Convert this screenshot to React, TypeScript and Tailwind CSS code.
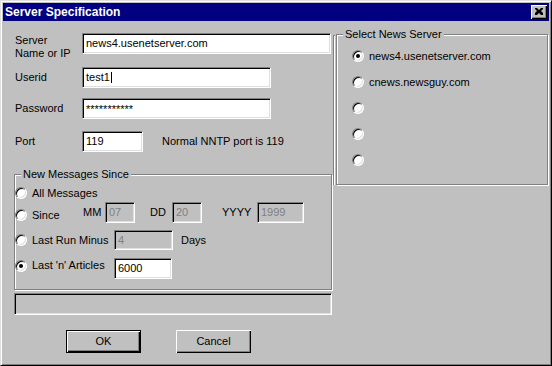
import type { ReactNode } from 'react';

const sunken =
  'border border-t-[#808080] border-l-[#808080] border-r-white border-b-white shadow-[inset_1px_1px_0_#000,inset_-1px_-1px_0_#dfdfdf]';
const etched = 'border border-[#808080] shadow-[1px_1px_0_#fff,inset_1px_1px_0_#fff]';

function Field({ className, value, disabled, children }: { className: string; value?: string; disabled?: boolean; children?: ReactNode }) {
  return (
    <div
      className={`${sunken} ${disabled ? 'bg-[#c0c0c0] text-[#808080]' : 'bg-white text-black'} ${className} flex items-center pl-[3px] shrink-0`}
    >
      {value}
      {children}
    </div>
  );
}

function Radio({ checked }: { checked?: boolean }) {
  return (
    <span className="w-[12px] h-[12px] rounded-full bg-white border border-t-[#808080] border-l-[#808080] border-r-white border-b-white shadow-[inset_1px_1px_0_#000,inset_-1px_-1px_0_#dfdfdf] flex items-center justify-center shrink-0">
      {checked && <span className="w-[4px] h-[4px] rounded-full bg-black" />}
    </span>
  );
}

function Group({ title, className, children }: { title: string; className: string; children: ReactNode }) {
  return (
    <div className={`relative ${etched} ${className} shrink-0`}>
      <span className="absolute -top-[7px] left-[6px] px-[2px] bg-[#c0c0c0] leading-[13px]">{title}</span>
      {children}
    </div>
  );
}

function Button({ label, isDefault }: { label: string; isDefault?: boolean }) {
  return (
    <div
      className={`w-[75px] h-[23px] flex items-center justify-center ${
        isDefault
          ? 'border border-black shadow-[inset_1px_1px_0_#fff,inset_-1px_-1px_0_#000,inset_-2px_-2px_0_#808080]'
          : 'shadow-[inset_1px_1px_0_#fff,inset_-1px_-1px_0_#000,inset_-2px_-2px_0_#808080]'
      }`}
    >
      {label}
    </div>
  );
}

export default function App() {
  const servers = ['news4.usenetserver.com', 'cnews.newsguy.com', '', '', ''];

  return (
    <div className="w-[552px] h-[366px] bg-[#c0c0c0] border border-t-[#dfdfdf] border-l-[#dfdfdf] border-r-black border-b-black shadow-[inset_1px_1px_0_#fff,inset_-1px_-1px_0_#808080] p-[2px] text-[11px] text-black font-['Liberation_Sans',Arial,sans-serif] flex flex-col overflow-hidden">
      {/* Title bar */}
      <div className="h-[18px] bg-[#000080] flex items-center justify-between pl-[2px] pr-[2px] shrink-0">
        <span className="text-white font-bold text-[12px]">Server Specification</span>
        <div className="w-[16px] h-[14px] bg-[#c0c0c0] shadow-[inset_1px_1px_0_#fff,inset_-1px_-1px_0_#000,inset_-2px_-2px_0_#808080] flex items-center justify-center">
          <svg width="8" height="7" viewBox="0 0 8 7" className="mb-[1px]">
            <path d="M0 0h2l2 2 2-2h2v1l-2 2 2 2v2H6L4 5 2 7H0V5l2-2-2-2z" fill="#000" />
          </svg>
        </div>
      </div>

      {/* Body */}
      <div className="flex pl-[11px]">
        {/* Left column */}
        <div className="w-[318px] flex flex-col shrink-0">
          <div className="flex items-start h-[21px] mt-[12px] pl-[1px]">
            <span className="w-[67px] leading-[13px] mt-[1px]">Server<br />Name or IP</span>
            <Field className="w-[249px] h-[21px]" value="news4.usenetserver.com" />
          </div>
          <div className="flex items-center mt-[13px] pl-[1px]">
            <span className="w-[67px]">Userid</span>
            <Field className="w-[189px] h-[21px]">
              test1<span className="w-[1px] h-[11px] bg-black ml-[1px]" />
            </Field>
          </div>
          <div className="flex items-center mt-[10px] pl-[1px]">
            <span className="w-[67px]">Password</span>
            <Field className="w-[189px] h-[21px] !items-start pt-[2px]" value="***********" />
          </div>
          <div className="flex items-center mt-[12px] pl-[1px]">
            <span className="w-[67px]">Port</span>
            <Field className="w-[61px] h-[21px]" value="119" />
            <span className="ml-[19px]">Normal NNTP port is 119</span>
          </div>

          <Group title="New Messages Since" className="mt-[22px] h-[116px] w-[318px]">
            <div className="flex flex-col">
              <div className="flex items-center h-[14px] mt-[11px]">
                <div className="flex items-center gap-[5px]">
                  <Radio />
                  <span>All Messages</span>
                </div>
              </div>
              <div className="flex items-center h-[21px] mt-[2px]">
                <div className="flex items-center gap-[5px] w-[68px] pt-[5px]">
                  <Radio />
                  <span>Since</span>
                </div>
                <span className="w-[22px]">MM</span>
                <Field disabled className="w-[30px] h-[21px]" value="07" />
                <span className="w-[22px] ml-[15px]">DD</span>
                <Field disabled className="w-[30px] h-[21px]" value="20" />
                <span className="w-[35px] ml-[20px]">YYYY</span>
                <Field disabled className="w-[47px] h-[21px]" value="1999" />
              </div>
              <div className="flex items-center h-[20px] mt-[7px]">
                <div className="flex items-center gap-[5px] w-[99px]">
                  <Radio />
                  <span>Last Run Minus</span>
                </div>
                <Field disabled className="w-[59px] h-[20px]" value="4" />
                <span className="ml-[8px]">Days</span>
              </div>
              <div className="flex items-center h-[21px] mt-[8px]">
                <div className="flex items-center gap-[5px] w-[99px] pb-[6px]">
                  <Radio checked />
                  <span>Last 'n' Articles</span>
                </div>
                <Field className="w-[58px] h-[21px]" value="6000" />
              </div>
            </div>
          </Group>

          <div className={`${sunken} bg-[#c0c0c0] mt-[3px] h-[22px] w-[318px]`} />

          <div className="flex mt-[15px] ml-[52px] gap-[35px]">
            <Button label="OK" isDefault />
            <Button label="Cancel" />
          </div>
        </div>

        {/* Stray frame edge */}
        <div className="ml-[1px] mt-[14px] w-[2px] h-[150px] border-l border-t border-[#808080] shadow-[inset_1px_1px_0_#fff] shrink-0" />

        {/* Right column */}
        <Group title="Select News Server" className="ml-[1px] mt-[13px] w-[212px] h-[151px]">
          <div className="flex flex-col mt-[8px] pl-[15px]">
            {servers.map((s, i) => (
              <div key={i} className="flex items-center gap-[5px] h-[26px]">
                <Radio checked={i === 0} />
                <span>{s}</span>
              </div>
            ))}
          </div>
        </Group>
      </div>
    </div>
  );
}
